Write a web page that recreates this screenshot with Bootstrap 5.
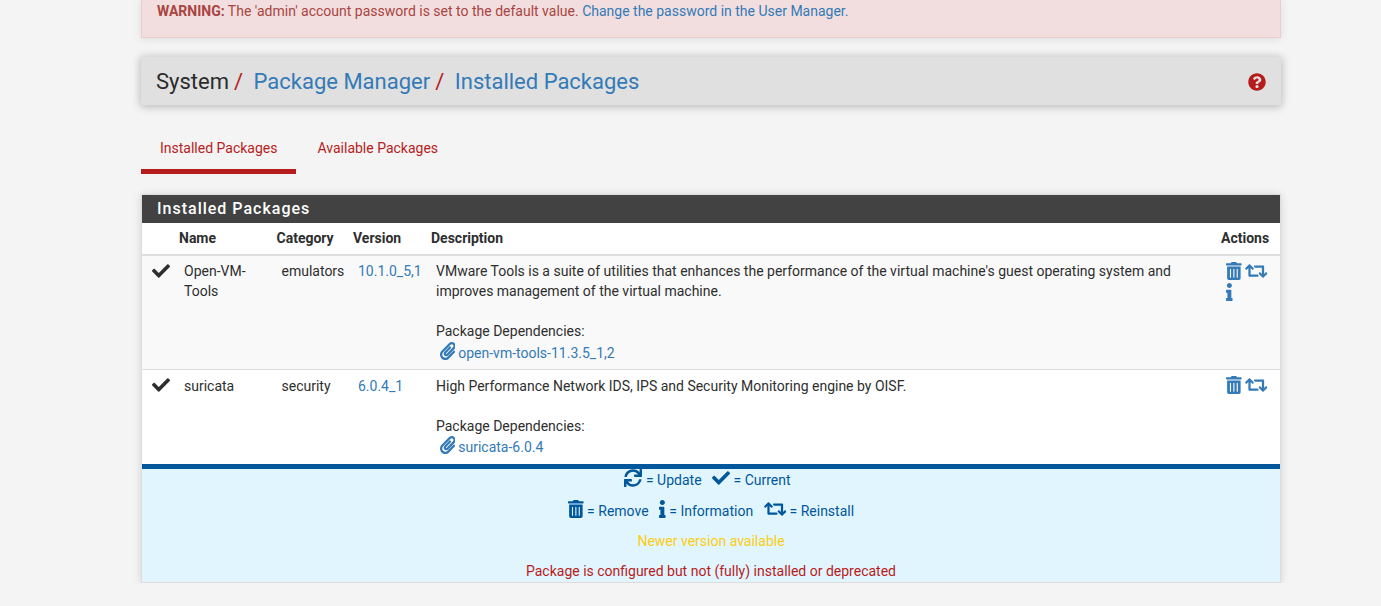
<!DOCTYPE html>
<html lang="en">
<head>
<meta charset="utf-8">
<meta name="viewport" content="width=device-width, initial-scale=1">
<title>System: Package Manager: Installed Packages</title>
<link href="https://cdn.jsdelivr.net/npm/bootstrap@5.3.0/dist/css/bootstrap.min.css" rel="stylesheet">
<style>
  body { font: 14px/20px Roboto, sans-serif; color: #2b2b2b; background: #f4f4f4; overflow: hidden; }
  a { color: #337ab7; text-decoration: none; }
  .page { width: 1140px; margin-left: 141px; }
  .warn { height: 38px; padding: 1px 15px 0; margin-bottom: 19px; background: #f2dede; border: 1px solid #ebccd1; border-top: 0; border-radius: 0; color: #a94442; box-shadow: 0 1px 8px rgba(0,0,0,.1); }
  .crumbs { height: 48px; padding: 2px 15px 0; background: #e0e0e0; font-size: 22px; box-shadow: 0 1px 8px 1px rgba(0,0,0,.24); border-radius: 2px; }
  .crumbs .sep { color: #b71c1c; margin: 0 10.5px 0 5px; }
  .tabs { height: 48px; margin-top: 21px; margin-bottom: 20px; }
  .tabs .nav-link { padding: 12px 19px 0; height: 48px; border-radius: 0; color: #b71c1c; }
  .tabs .nav-item + .nav-item { margin-left: 2px; }
  .tabs .active { border-bottom: 5px solid #b71c1c; }
  .panel { background: #fff; border: 1px solid #ddd; border-radius: 0; box-shadow: 0 1px 8px rgba(0,0,0,.14); }
  .panel-title { height: 28px; padding: 0 15px; line-height: 27px; background: #424242; color: #fff; font-size: 16px; font-weight: 500; letter-spacing: 1px; }
  .pkgs { --bs-table-striped-bg: #f9f9f9; --bs-table-striped-color: #2e2e2e; table-layout: fixed; margin: 0; line-height: 20px; }
  .pkgs > :not(caption) > * > * { border-bottom: 0; color: #2e2e2e !important; }
  .pkgs > thead > tr > th { height: 32px; padding: 4px 5px 6px; border-bottom: 2px solid #ddd; font-weight: 700; }
  .pkgs > tbody > tr > td { padding: 5px 10px 6px; }
  .pkgs > tbody > tr + tr > td { border-top: 1px solid #ddd; padding: 6px 10px 7px; }
  .dep { padding: 2px 0 0 4px; }
  tr + tr .dep { padding-top: 1px; }
  .ico { height: 18px; width: auto; fill: currentColor; vertical-align: -4px; }
  tr + tr .ico { vertical-align: -3px; }
  .pkgs .info-ico { vertical-align: -5px; }
  .pkgs .dep .ico { vertical-align: -3px; margin: -1px 3px 1px -.5px; }
  .legend { height: 118px; border-top: 5px solid #01579b; background: #e1f5fe; color: #01579b; }
  .legend p { height: 20px; margin-bottom: 10px; white-space: pre; }
  .legend .icons { margin-bottom: 11px; }
  .legend .ico { vertical-align: -2px; }
</style>
</head>
<body>
<svg class="d-none" xmlns="http://www.w3.org/2000/svg">
  <symbol id="check" viewBox="0 0 512 512"><path d="M173.898 439.404l-166.4-166.4c-9.997-9.997-9.997-26.206 0-36.204l36.203-36.204c9.997-9.998 26.207-9.998 36.204 0L192 312.69 432.095 72.596c9.997-9.997 26.207-9.997 36.204 0l36.203 36.204c9.997 9.997 9.997 26.206 0 36.204l-294.4 294.401c-9.998 9.997-26.207 9.997-36.204-.001z"/></symbol>
  <symbol id="trash" viewBox="0 0 448 512"><path d="M32 464a48 48 0 0 0 48 48h288a48 48 0 0 0 48-48V128H32zm272-256a16 16 0 0 1 32 0v224a16 16 0 0 1-32 0zm-96 0a16 16 0 0 1 32 0v224a16 16 0 0 1-32 0zm-96 0a16 16 0 0 1 32 0v224a16 16 0 0 1-32 0zM432 32H312l-9.4-18.7A24 24 0 0 0 281.1 0H166.8a23.72 23.72 0 0 0-21.4 13.3L136 32H16A16 16 0 0 0 0 48v32a16 16 0 0 0 16 16h416a16 16 0 0 0 16-16V48a16 16 0 0 0-16-16z"/></symbol>
  <symbol id="retweet" viewBox="0 0 640 512"><path d="M629.657 343.598L528.971 444.284c-9.373 9.372-24.568 9.372-33.941 0L394.343 343.598c-9.373-9.373-9.373-24.569 0-33.941l10.823-10.823c9.562-9.562 25.133-9.34 34.419.492L480 342.118V160H292.451a24.005 24.005 0 0 1-16.971-7.029l-16-16C244.361 121.851 255.069 96 276.451 96H520c13.255 0 24 10.745 24 24v222.118l40.416-42.792c9.285-9.831 24.856-10.054 34.419-.492l10.823 10.823c9.372 9.372 9.372 24.569-.001 33.941zm-265.138 15.431A23.999 23.999 0 0 0 347.548 352H160V169.881l40.416 42.792c9.286 9.831 24.856 10.054 34.419.491l10.822-10.822c9.373-9.373 9.373-24.569 0-33.941L144.971 67.716c-9.373-9.373-24.569-9.373-33.941 0L10.343 168.402c-9.373 9.373-9.373 24.569 0 33.941l10.822 10.822c9.562 9.562 25.133 9.34 34.419-.491L96 169.882V392c0 13.255 10.745 24 24 24h243.549c21.382 0 32.09-25.851 16.971-40.971l-16.001-16z"/></symbol>
  <symbol id="info" viewBox="0 0 192 512"><path d="M20 424.229h20V279.771H20c-11.046 0-20-8.954-20-20V212c0-11.046 8.954-20 20-20h112c11.046 0 20 8.954 20 20v212.229h20c11.046 0 20 8.954 20 20V492c0 11.046-8.954 20-20 20H20c-11.046 0-20-8.954-20-20v-47.771c0-11.046 8.954-20 20-20zM96 0C56.235 0 24 32.235 24 72s32.235 72 72 72 72-32.235 72-72S135.764 0 96 0z"/></symbol>
  <symbol id="question" viewBox="0 0 512 512"><path d="M504 256c0 136.997-111.043 248-248 248S8 392.997 8 256C8 119.083 119.043 8 256 8s248 111.083 248 248zM262.655 90c-54.497 0-89.255 22.957-116.549 63.758-3.536 5.286-2.353 12.415 2.715 16.258l34.699 26.31c5.205 3.947 12.621 3.008 16.665-2.122 17.864-22.658 30.113-35.797 57.303-35.797 20.429 0 45.698 13.148 45.698 32.958 0 14.976-12.363 22.667-32.534 33.976C247.128 238.528 216 254.941 216 296v4c0 6.627 5.373 12 12 12h56c6.627 0 12-5.373 12-12v-1.333c0-28.462 83.186-29.647 83.186-106.667 0-58.002-60.165-102-116.531-102zM256 338c-25.365 0-46 20.635-46 46 0 25.364 20.635 46 46 46s46-20.636 46-46c0-25.365-20.635-46-46-46z"/></symbol>
  <symbol id="sync" viewBox="0 0 512 512"><path d="M440.65 12.57l4 82.77A247.16 247.16 0 0 0 255.83 8C134.73 8 33.91 94.92 12.29 209.82A12 12 0 0 0 24.09 224h49.05a12 12 0 0 0 11.67-9.26 175.91 175.91 0 0 1 317-56.94l-101.46-4.86a12 12 0 0 0-12.57 12v47.41a12 12 0 0 0 12 12H500a12 12 0 0 0 12-12V12a12 12 0 0 0-12-12h-47.37a12 12 0 0 0-11.98 12.57zM255.83 432a175.61 175.61 0 0 1-146-77.8l101.8 4.87a12 12 0 0 0 12.57-12v-47.4a12 12 0 0 0-12-12H12a12 12 0 0 0-12 12V500a12 12 0 0 0 12 12h47.35a12 12 0 0 0 12-12.6l-4.15-82.57A247.17 247.17 0 0 0 255.83 504c121.11 0 221.93-86.92 243.55-201.82a12 12 0 0 0-11.8-14.18h-49.05a12 12 0 0 0-11.67 9.26A175.86 175.86 0 0 1 255.83 432z"/></symbol>
  <symbol id="clip" viewBox="0 0 448 512"><path d="M43.246 466.142c-58.43-60.289-57.341-157.511 1.386-217.581L254.392 34c44.316-45.332 116.351-45.336 160.671 0 43.89 44.894 43.943 117.329 0 162.276L232.214 383.128c-29.855 30.537-78.633 30.111-107.982-.998-28.275-29.97-27.368-77.473 1.452-106.953l143.743-146.835c6.182-6.314 16.312-6.422 22.626-.241l22.861 22.379c6.315 6.182 6.422 16.312.241 22.626L171.427 319.927c-4.932 5.045-5.236 13.428-.648 18.292 4.372 4.634 11.245 4.711 15.688.165l182.849-186.851c19.613-20.062 19.613-52.725-.011-72.798-19.189-19.627-49.957-19.637-69.154 0L90.39 293.295c-34.763 35.56-35.299 93.12-1.191 128.313 34.01 35.093 88.985 35.137 123.058.286l172.06-175.999c6.177-6.319 16.307-6.433 22.626-.256l22.877 22.364c6.319 6.177 6.434 16.307.256 22.626l-172.06 175.998c-59.576 60.938-155.943 60.216-214.77-.485z"/></symbol>
</svg>
<main class="page">
  <div class="warn"><strong>WARNING:</strong> The 'admin' account password is set to the default value. <a href="#">Change the password in the User Manager.</a></div>
  <header class="crumbs d-flex align-items-center">
    <span>System</span><span class="sep">/</span><a href="#">Package Manager</a><span class="sep">/</span><a href="#">Installed Packages</a>
    <a href="#" class="ms-auto d-flex" style="color:#b71c1c"><svg class="ico" viewBox="0 0 512 512"><use href="#question"/></svg></a>
  </header>
  <ul class="nav tabs">
    <li class="nav-item"><a class="nav-link active" href="#">Installed Packages</a></li>
    <li class="nav-item"><a class="nav-link" href="#">Available Packages</a></li>
  </ul>
  <section class="panel">
    <div class="panel-title">Installed Packages</div>
    <table class="table table-striped pkgs">
      <colgroup><col style="width:32px"><col style="width:97.5px"><col style="width:76.5px"><col style="width:78px"><col><col style="width:64px"></colgroup>
      <thead><tr><th></th><th>Name</th><th>Category</th><th>Version</th><th>Description</th><th>Actions</th></tr></thead>
      <tbody>
        <tr>
          <td class="pe-0"><svg class="ico" viewBox="0 0 512 512"><use href="#check"/></svg></td>
          <td>Open-VM-Tools</td>
          <td class="pe-0">emulators</td>
          <td class="pe-0"><a href="#">10.1.0_5,1</a></td>
          <td>VMware Tools is a suite of utilities that enhances the performance of the virtual machine's guest operating system and improves management of the virtual machine.<br><br>Package Dependencies:
            <div class="dep"><a href="#"><svg class="ico" viewBox="0 0 448 512"><use href="#clip"/></svg>open-vm-tools-11.3.5_1,2</a></div></td>
          <td><a href="#"><svg class="ico" viewBox="0 0 448 512"><use href="#trash"/></svg></a> <a href="#"><svg class="ico" viewBox="0 0 640 512"><use href="#retweet"/></svg></a><br><a href="#"><svg class="ico info-ico" viewBox="0 0 192 512"><use href="#info"/></svg></a></td>
        </tr>
        <tr>
          <td class="pe-0"><svg class="ico" viewBox="0 0 512 512"><use href="#check"/></svg></td>
          <td>suricata</td>
          <td class="pe-0">security</td>
          <td class="pe-0"><a href="#">6.0.4_1</a></td>
          <td>High Performance Network IDS, IPS and Security Monitoring engine by OISF.<br><br>Package Dependencies:
            <div class="dep"><a href="#"><svg class="ico" viewBox="0 0 448 512"><use href="#clip"/></svg>suricata-6.0.4</a></div></td>
          <td><a href="#"><svg class="ico" viewBox="0 0 448 512"><use href="#trash"/></svg></a> <a href="#"><svg class="ico" viewBox="0 0 640 512"><use href="#retweet"/></svg></a></td>
        </tr>
      </tbody>
    </table>
    <div class="legend text-center">
      <p class="icons"><svg class="ico" viewBox="0 0 512 512"><use href="#sync"/></svg> = Update   <svg class="ico" viewBox="0 0 512 512"><use href="#check"/></svg> = Current  </p>
      <p class="icons"><svg class="ico" viewBox="0 0 448 512"><use href="#trash"/></svg> = Remove   <svg class="ico" viewBox="0 0 192 512"><use href="#info"/></svg> = Information   <svg class="ico" viewBox="0 0 640 512"><use href="#retweet"/></svg> = Reinstall</p>
      <p style="color:#fbcd11">Newer version available</p>
      <p style="color:#b71c1c">Package is configured but not (fully) installed or deprecated</p>
    </div>
  </section>
</main>
<script src="https://cdn.jsdelivr.net/npm/bootstrap@5.3.0/dist/js/bootstrap.bundle.min.js"></script>
</body>
</html>
